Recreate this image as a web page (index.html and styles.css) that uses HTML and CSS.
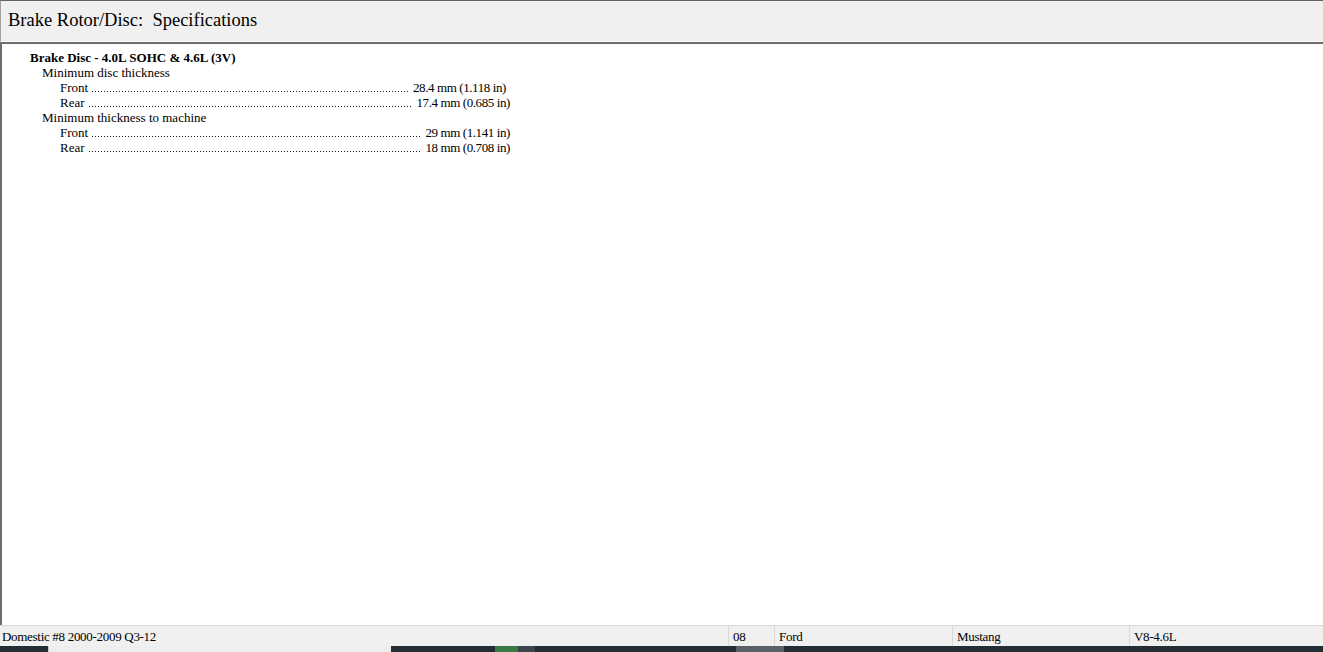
FILE: index.html
```html
<!DOCTYPE html>
<html>
<head>
<meta charset="utf-8">
<link rel="stylesheet" href="styles.css">
</head>
<body>
<div class="titlebar"><span class="title">Brake Rotor/Disc:&nbsp; Specifications</span></div>
<div class="content">
  <div class="heading">Brake Disc - 4.0L SOHC &amp; 4.6L (3V)</div>
  <div class="sub">Minimum disc thickness</div>
  <div class="row r1"><span class="label">Front</span><span class="dots"></span><span class="val">28.4 mm (1.118 in)</span></div>
  <div class="row"><span class="label">Rear</span><span class="dots"></span><span class="val">17.4 mm (0.685 in)</span></div>
  <div class="sub">Minimum thickness to machine</div>
  <div class="row"><span class="label">Front</span><span class="dots"></span><span class="val">29 mm (1.141 in)</span></div>
  <div class="row"><span class="label">Rear</span><span class="dots"></span><span class="val">18 mm (0.708 in)</span></div>
</div>
<div class="statusbar">
  <div class="cell c1">Domestic #8 2000-2009 Q3-12</div>
  <div class="cell c2">08</div>
  <div class="cell c3">Ford</div>
  <div class="cell c4">Mustang</div>
  <div class="cell c5">V8-4.6L</div>
</div>
<div class="taskbar">
  <div class="seg s-dark w48"></div>
  <div class="seg s-light w343"></div>
  <div class="seg s-dark w104"></div>
  <div class="seg s-green w23"></div>
  <div class="seg s-mid w17"></div>
  <div class="seg s-dark w201"></div>
  <div class="seg s-gray w48"></div>
  <div class="seg s-dark grow"></div>
</div>
</body>
</html>
```

FILE: styles.css
```css
html, body {
  margin: 0;
  padding: 0;
}
body {
  width: 1323px;
  height: 652px;
  display: flex;
  flex-direction: column;
  overflow: hidden;
  background: #ffffff;
  font-family: "Liberation Serif", "Times New Roman", serif;
  color: #000;
}
.titlebar {
  background: #f0f0f0;
  border-top: 1px solid #646464;
  border-left: 1px solid #a0a0a0;
  border-bottom: 1px solid #fbfbfb;
  display: flex;
  align-items: center;
  padding-left: 7px;
  padding-bottom: 1px;
  box-sizing: border-box;
  height: 42px;
  flex: none;
}
.title {
  font-size: 18.5px;
  white-space: pre;
}
.content {
  flex: 1;
  border-top: 2px solid #6e6e6e;
  border-left: 2px solid #6e6e6e;
  background: #fff;
  padding-top: 6px;
  font-size: 13px;
  line-height: 15px;
}
.heading {
  font-weight: bold;
  padding-left: 28px;
}
.sub {
  padding-left: 40px;
}
.row {
  display: flex;
  margin-left: 58px;
  width: 450px;
  white-space: nowrap;
}
.row.r1 {
  width: 446px;
}
.label {
  flex: none;
  padding-right: 4px;
}
.dots {
  flex: 1;
  min-width: 0;
  background-image: linear-gradient(to right, #111 1px, transparent 1px);
  background-size: 3px 1px;
  background-repeat: repeat-x;
  background-position: 0 11px;
}
.val {
  flex: none;
  padding-left: 4px;
  letter-spacing: -0.4px;
}
.statusbar {
  flex: none;
  height: 20px;
  background: #f0f0f0;
  border-top: 1px solid #dadada;
  display: flex;
  font-size: 13px;
  line-height: 21px;
}
.cell {
  padding-left: 4px;
  white-space: nowrap;
  border-right: 1px solid #d9d9d9;
  letter-spacing: -0.3px;
}
.c1 { width: 726px; padding-left: 2px; }
.c2 { width: 41px; }
.c3 { width: 173px; }
.c4 { width: 172px; }
.c5 { flex: 1; border-right: none; }
.taskbar {
  flex: none;
  height: 6px;
  display: flex;
}
.seg { height: 6px; }
.s-dark { background: #222e34; }
.s-light { background: #eeeeee; border-left: 1px solid #c9c9c9; box-sizing: border-box; }
.s-green { background: #3c7a45; }
.s-mid { background: #3b464c; }
.s-gray { background: #5b6267; }
.w48 { width: 48px; }
.w343 { width: 343px; }
.w104 { width: 104px; }
.w23 { width: 23px; }
.w17 { width: 17px; }
.w201 { width: 201px; }
.grow { flex: 1; }
```
